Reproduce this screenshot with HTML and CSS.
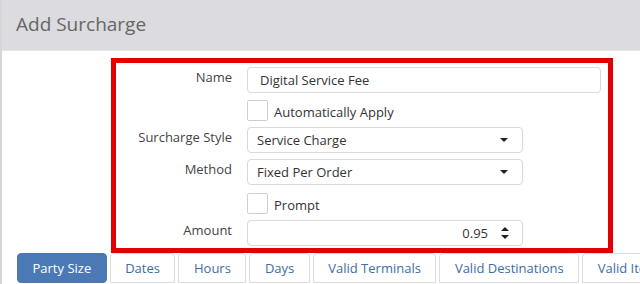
FILE: index.html
```html
<!DOCTYPE html>
<html>
<head>
<meta charset="utf-8">
<link rel="stylesheet" href="styles.css">
</head>
<body>
<div class="modal">
  <div class="header"><h1 class="title">Add Surcharge</h1></div>
  <div class="content">
    <div class="highlight">
      <div class="row row-name">
        <label class="lbl">Name</label>
        <div class="field wide"><span class="val">Digital Service Fee</span></div>
      </div>
      <div class="row row-check r2">
        <span class="lbl"></span>
        <span class="check"></span><span class="check-text">Automatically Apply</span>
      </div>
      <div class="row r3">
        <label class="lbl">Surcharge Style</label>
        <div class="field select"><span class="val">Service Charge</span><span class="caret"></span></div>
      </div>
      <div class="row r4">
        <label class="lbl">Method</label>
        <div class="field select"><span class="val">Fixed Per Order</span><span class="caret"></span></div>
      </div>
      <div class="row row-check r5">
        <span class="lbl"></span>
        <span class="check"></span><span class="check-text">Prompt</span>
      </div>
      <div class="row r6">
        <label class="lbl">Amount</label>
        <div class="field select number"><span class="val num">0.95</span>
          <span class="spin"><span class="up"></span><span class="down"></span></span>
        </div>
      </div>
    </div>
    <div class="tabs">
      <span class="tab active">Party Size</span>
      <span class="tab">Dates</span>
      <span class="tab">Hours</span>
      <span class="tab">Days</span>
      <span class="tab">Valid Terminals</span>
      <span class="tab">Valid Destinations</span>
      <span class="tab">Valid Items</span>
    </div>
  </div>
</div>
</body>
</html>
```
FILE: styles.css
```css
html, body { margin: 0; padding: 0; background: #fff; }
body { width: 640px; height: 284px; overflow: hidden; font-family: "Open Sans", "Noto Sans", sans-serif; font-size: 13px; color: #333; }
.modal { border-left: 2px solid #d6d6d6; height: 284px; box-sizing: border-box; overflow: hidden; }
.header { height: 50px; background: #dcdbe0; display: flex; align-items: center; padding-left: 14px; border-bottom: 1px solid #e6e6e6; }
.title { margin: 0; font-weight: 400; font-size: 19px; color: #666; position: relative; top: -1px; }
.content { padding-top: 7px; }
.highlight { margin-left: 109px; width: 502px; height: 195px; box-sizing: border-box; border: 5px solid #e30000; padding-top: 4px; }
.row { display: flex; align-items: flex-start; }
.r2 { margin-top: 7px; }
.r3 { margin-top: 6px; }
.r4 { margin-top: 6px; }
.r5 { margin-top: 8px; }
.r6 { margin-top: 6px; }
.lbl { width: 116px; flex: none; text-align: right; line-height: 20px; color: #444; margin-right: 15px; }
.field { height: 26px; box-sizing: border-box; border: 1px solid #d9d9d9; border-radius: 4px; display: flex; align-items: center; }
.wide { width: 354px; padding-left: 12px; }
.select { width: 276px; padding-left: 9px; padding-right: 14px; justify-content: space-between; }
.val { color: #333; }
.caret { width: 0; height: 0; border-left: 4px solid transparent; border-right: 4px solid transparent; border-top: 4px solid #222; }
.number { justify-content: flex-end; padding-right: 13px; }
.num { margin-right: 13px; }
.spin { display: flex; flex-direction: column; gap: 4px; }
.up { width: 0; height: 0; border-left: 4px solid transparent; border-right: 4px solid transparent; border-bottom: 4px solid #222; }
.down { width: 0; height: 0; border-left: 4px solid transparent; border-right: 4px solid transparent; border-top: 4px solid #222; }
.row-check { align-items: center; height: 21px; }
.check { width: 21px; height: 21px; box-sizing: border-box; border: 1px solid #cfcfcf; border-radius: 2px; flex: none; }
.check-text { margin-left: 6px; color: #333; position: relative; top: 1px; }
.tabs { display: flex; gap: 3px; margin-left: 15px; margin-top: 0; white-space: nowrap; overflow: hidden; }
.tab { height: 30px; box-sizing: border-box; border: 1px solid #ddd; border-radius: 4px 4px 0 0; padding: 0 14.5px; display: flex; align-items: center; color: #3e6ca3; flex: none; }
.tab.active { background: #4a79b5; border-color: #4a79b5; color: #fff; border-radius: 4px; }
```
